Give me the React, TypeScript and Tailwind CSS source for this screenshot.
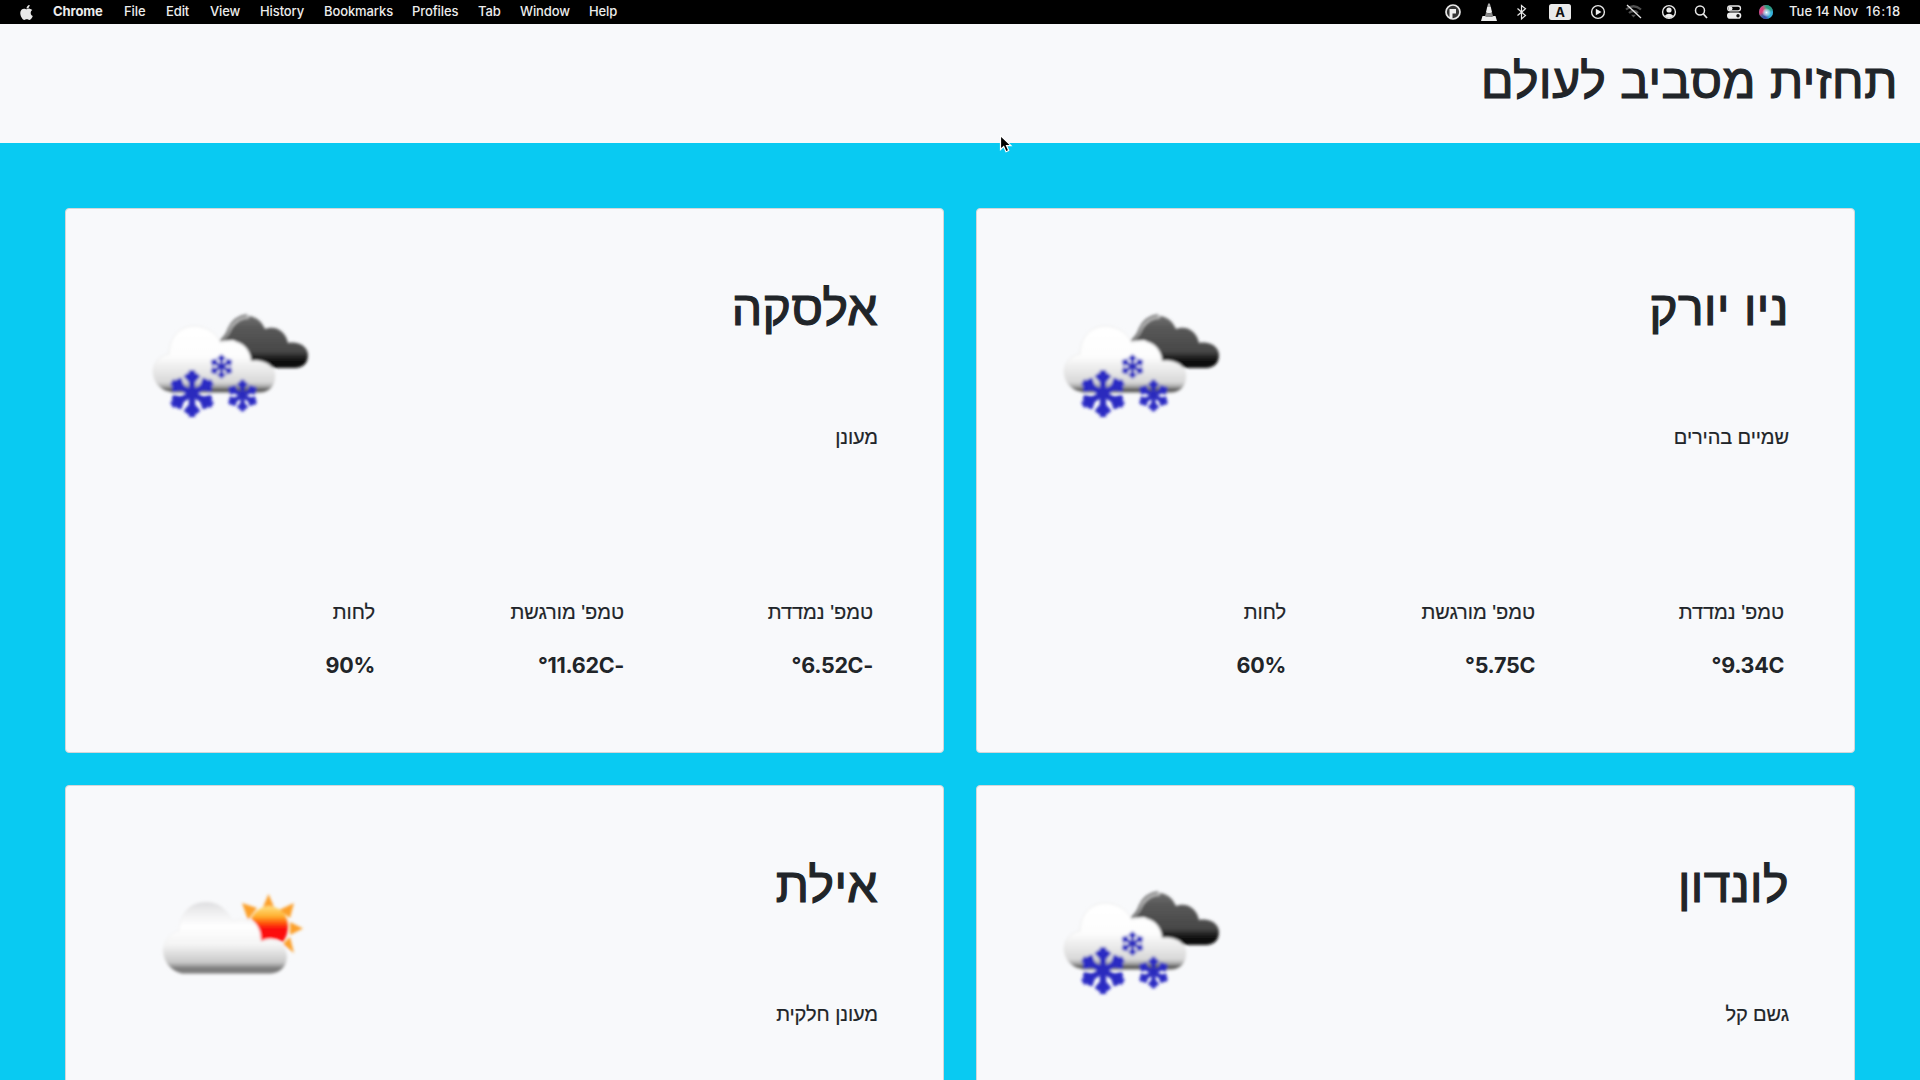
import React from "react";

const menu = [
  ["Chrome", "w-[71px] font-bold"],
  ["File", "w-[42px]"],
  ["Edit", "w-[44px]"],
  ["View", "w-[50px]"],
  ["History", "w-[64px]"],
  ["Bookmarks", "w-[88px]"],
  ["Profiles", "w-[66px]"],
  ["Tab", "w-[42px]"],
  ["Window", "w-[69px]"],
  ["Help", "w-[40px]"],
];

function Flake({ x, y, r, id }: { x: number; y: number; r: number; id: string }) {
  return (
    <g transform={`translate(${x} ${y}) scale(${r / 10})`} stroke={`url(#${id}f)`} fill="none">
      {[0, 60, 120, 180, 240, 300].map((a) => (
        <g key={a} transform={`rotate(${a})`}>
          <path d="M0.010 0.5L0 -9.8" strokeWidth="2.6" />
          <path d="M-2.6 -8L0 -5L2.6 -8" strokeWidth="2.4" />
        </g>
      ))}
    </g>
  );
}

function SnowIcon({ id }: { id: string }) {
  return (
    <svg viewBox="0 0 200 150" className="ml-[-1px] h-[150px] w-[200px]">
      <defs>
        <linearGradient id={id + "d"} x1="0" y1="25" x2="0" y2="78" gradientUnits="userSpaceOnUse">
          <stop offset="0" stopColor="#707070" />
          <stop offset=".25" stopColor="#575757" />
          <stop offset=".68" stopColor="#484848" />
          <stop offset=".88" stopColor="#080808" />
          <stop offset="1" stopColor="#111" />
        </linearGradient>
        <linearGradient id={id + "w"} x1="0" y1="35" x2="0" y2="104" gradientUnits="userSpaceOnUse">
          <stop offset="0" stopColor="#fff" />
          <stop offset=".45" stopColor="#fdfdfd" />
          <stop offset=".83" stopColor="#d8d8d8" />
          <stop offset=".89" stopColor="#aaa" />
          <stop offset=".94" stopColor="#555" />
          <stop offset="1" stopColor="#777" />
        </linearGradient>
        <linearGradient id={id + "f"} x1="-10" y1="-10" x2="10" y2="10" gradientUnits="userSpaceOnUse">
          <stop offset="0" stopColor="#2c2cd0" />
          <stop offset="1" stopColor="#2a2aa8" />
        </linearGradient>
        <filter id={id + "b"}><feGaussianBlur stdDeviation="1.4" /></filter>
      </defs>
      <g filter={`url(#${id}b)`}>
        <path d="M90 51C97 49 97 43 99 38C103 28 112 25 119 26C127 27 132 32 135 39C146 35 156 42 158 53C169 51 178 57 178 65C178 73 173 78 165 78H145L121 71L104 50Z" fill={`url(#${id}d)`} />
        <path d="M92 50Q98 44 101 37Q108 27 119 27" fill="none" stroke="#c0c0c0" strokeWidth="3" />
        <path d="M90 51Q96 47 99 38Q104 27 117 25" fill="none" stroke="#555" strokeWidth="1.6" />
        <path d="M39 102C29 100 23 91 23 81C24 71 31 65 39 64C39 48 49 36 64 36C77 36 86 43 91 53C105 47 120 55 121 71C134 69 145 76 145 86C145 96 140 102 131 103H42Z" fill={`url(#${id}w)`} stroke="#e6e6e6" strokeWidth=".8" />
        <Flake x={62} y={103.5} r={24} id={id} />
        <Flake x={91.5} y={76.5} r={12} id={id} />
        <Flake x={112.5} y={105.5} r={16} id={id} />
      </g>
    </svg>
  );
}

function SunIcon() {
  return (
    <svg viewBox="0 0 200 130" className="mt-[3px] ml-[9px] h-[130px] w-[200px]">
      <defs>
        <linearGradient id="sun" x1="0" y1="36" x2="0" y2="73" gradientUnits="userSpaceOnUse">
          <stop offset="0" stopColor="#ffe080" />
          <stop offset=".28" stopColor="#ffb02e" />
          <stop offset=".45" stopColor="#ff5a08" />
          <stop offset=".62" stopColor="#fb0808" />
          <stop offset="1" stopColor="#ff1010" />
        </linearGradient>
        <linearGradient id="cl" x1="0" y1="31" x2="0" y2="104" gradientUnits="userSpaceOnUse">
          <stop offset="0" stopColor="#dcdcde" />
          <stop offset=".18" stopColor="#f1f1f2" />
          <stop offset=".35" stopColor="#fff" />
          <stop offset=".6" stopColor="#f4f4f4" />
          <stop offset=".84" stopColor="#c8c8c8" />
          <stop offset=".93" stopColor="#777" />
          <stop offset="1" stopColor="#888" />
        </linearGradient>
        <filter id="sb"><feGaussianBlur stdDeviation="1.4" /></filter>
      </defs>
      <g filter="url(#sb)">
        <g fill="#fca02c">
          <path d="M128.500 24L134 37H123Z" />
          <path d="M102 33L117 38L108 50Z" />
          <path d="M154 33L150 48L139 40Z" />
          <path d="M163 58.500L150 52V65Z" />
          <path d="M154 83L143 74L150 67Z" />
        </g>
        <path d="M42 104C30 101 23 91 23 80C24 70 31 62 39 61C40 43 50 32 66 32C79 32 88 40 92 51C107 45 121 54 122 70C136 67 147 76 147 87C147 96 141 103 131 104Z" fill="url(#cl)" stroke="#ececec" strokeWidth=".6" />
        <path d="M111 49C115 40 122 36 130 36C140 37 148 45 148 56C148 63 146 68 143 72Q132 66 121 71C121 61 118 54 111 49Z" fill="url(#sun)" />
      </g>
    </svg>
  );
}

type City = { name: string; desc: string; icon: React.ReactNode; temps?: [string, string, string] };

const cities: City[] = [
  { name: "ניו יורק", desc: "שמיים בהירים", icon: <SnowIcon id="a" />, temps: ["9.34C°", "5.75C°", "60%"] },
  { name: "אלסקה", desc: "מעונן", icon: <SnowIcon id="b" />, temps: ["-6.52C°", "-11.62C°", "90%"] },
  { name: "לונדון", desc: "גשם קל", icon: <SnowIcon id="c" /> },
  { name: "אילת", desc: "מעונן חלקית", icon: <SunIcon /> },
];

function Card({ city }: { city: City }) {
  return (
    <article className="h-[545px] w-[879px] rounded-[4px] border border-[#d3d6d9] bg-[#f8f9fb] px-[65px] pt-[67px]">
      <div className="flex h-[300px] justify-between">
        <div className="font-['Liberation_Sans',sans-serif]">
          <h2 className="h-[66px] text-[48px] leading-[66px] tracking-[0.5px] whitespace-nowrap [-webkit-text-stroke:1.2px_#212529]">{city.name}</h2>
          <p className="mt-[80px] text-[20px] leading-[30px] tracking-[-0.1px] whitespace-nowrap [-webkit-text-stroke:0.2px_#212529]">{city.desc}</p>
        </div>
        <div className="mt-[14px]">{city.icon}</div>
      </div>
      {city.temps && (
        <div className="mt-[21px] flex pr-[5px]">
          {["טמפ' נמדדת", "טמפ' מורגשת", "לחות"].map((l, i) => (
            <div key={l} className="w-[249px] shrink-0">
              <div className="font-['Liberation_Sans',sans-serif] text-[20px] leading-[30px] whitespace-nowrap [-webkit-text-stroke:0.2px_#212529]">{l}</div>
              <div className="mt-[23px] text-[21.5px] font-bold leading-[30px] tracking-[-0.3px] whitespace-nowrap">{city.temps?.[i]}</div>
            </div>
          ))}
        </div>
      )}
    </article>
  );
}

function StatusIcons() {
  return (
    <svg viewBox="1440 0 340 24" className="h-[24px] w-[340px]" fill="none" stroke="#e8e8e8">
      <circle cx="1453" cy="12" r="7" fill="#333" strokeWidth="1.7" />
      <path d="M1449.500 18V9h6.500v4.500h-3.500V18Z" fill="#eee" stroke="none" />
      <path d="M1487.200 7L1488.200 3.500h1.600L1490.800 7Z" fill="#aaa" stroke="none" />
      <path d="M1487.200 7h3.600l1.300 5.500q-3 1.500-6.200 0Z" fill="#eee" stroke="none" />
      <path d="M1486 12.500q3 1.500 6 0l1 3.500q-4 2-8 0Z" fill="#888" stroke="none" />
      <path d="M1482.500 16h2.200q4.500 2 9 0h1.800l1.500 5h-16Z" fill="#eee" stroke="none" />
      <path d="M1517.500 8.500L1525.500 15.500L1521.500 19V5.500L1525.500 8.800L1517.500 15.500" strokeWidth="1.200" />
      <rect x="1549" y="4" width="22" height="16" rx="2.500" fill="#eaeaea" stroke="none" />
      <text x="1560" y="17" textAnchor="middle" fontSize="13" fontWeight="700" fill="#111" stroke="none" fontFamily="Inter">A</text>
      <circle cx="1598" cy="12" r="6.400" strokeWidth="1.400" />
      <path d="M1595.800 8.800L1601.500 12L1595.800 15.200Z" fill="#eee" stroke="none" />
      <g stroke="#505050" strokeWidth="2.200"><path d="M1626 9.500q7.500-6.500 15 0M1629 13q4.500-4 9 0" /><path d="M1631 14.800L1633.500 17.500L1636 14.800Z" fill="#505050" stroke="none" /></g>
      <path d="M1627 5L1641 18" strokeWidth="1.300" />
      <circle cx="1669" cy="12" r="6.400" strokeWidth="1.400" />
      <g fill="#eee" stroke="none"><circle cx="1669" cy="10" r="2.600" /><path d="M1664.500 16q4.500-4.500 9 0q-4.500 4-9 0Z" /></g>
      <circle cx="1700" cy="10.500" r="4.500" strokeWidth="1.500" /><path d="M1703.400 14L1707 18" strokeWidth="1.800" />
      <rect x="1727.700" y="6" width="12.800" height="4.800" rx="2.400" strokeWidth="1.300" /><circle cx="1730.500" cy="8.400" r="2" fill="#eee" stroke="none" />
      <rect x="1727" y="12.600" width="14.300" height="6.200" rx="3.100" fill="#eee" stroke="none" /><circle cx="1738" cy="15.700" r="1.700" fill="#111" stroke="none" />
      <defs>
        <radialGradient id="siri"><stop stopColor="#fff" /><stop offset=".35" stopColor="#b5dcf5" stopOpacity=".9" /><stop offset="1" stopColor="#fff" stopOpacity="0" /></radialGradient>
        <clipPath id="sc"><circle cx="1766" cy="12" r="7" /></clipPath>
        <filter id="sf"><feGaussianBlur stdDeviation="1.3" /></filter>
      </defs>
      <g clipPath="url(#sc)" stroke="none">
        <rect x="1759" y="5" width="14" height="14" fill="#3f6a9c" />
        <g filter="url(#sf)">
          <path d="M1766 12L1757 17V5L1763 4Z" fill="#d8407c" />
          <path d="M1766 12L1763 3H1775V10Z" fill="#2c9c80" />
          <path d="M1766 12L1776 10V18L1769 20Z" fill="#35b4dc" />
          <path d="M1766 12L1768 21H1760Z" fill="#3a50b0" />
        </g>
      </g>
      <circle cx="1766.500" cy="12.500" r="4.500" fill="url(#siri)" stroke="none" />
    </svg>
  );
}

export default function App() {
  return (
    <div className="relative h-[1080px] w-[1920px] overflow-hidden bg-[#09caf2] font-[Inter,'Open_Sans',sans-serif] text-[#212529]">
      <nav className="flex h-[24px] items-center bg-black text-[13px] font-medium tracking-[-0.1px] text-[#ececec]">
        <svg viewBox="0 0 384 512" className="ml-[20px] mr-[20px] h-[17px] w-[13px]" fill="#e8e8e8">
          <path d="M318.700 268.700c-.2-36.700 16.400-64.400 50-84.800-18.800-26.900-47.200-41.700-84.700-44.600-35.500-2.800-74.300 20.700-88.500 20.700-15 0-49.400-19.700-76.400-19.700C63.300 141.200 4 184.800 4 273.500q0 39.300 14.400 81.200c12.800 36.700 59 126.700 107.200 125.200 25.200-.6 43-17.900 75.800-17.900 31.800 0 48.300 17.900 76.400 17.900 48.600-.7 90.400-82.500 102.600-119.300-65.200-30.700-61.700-90-61.700-91.900zm-56.600-164.200c27.300-32.400 24.800-61.900 24-72.500-24.100 1.400-52 16.400-67.900 34.900-17.500 19.800-27.800 44.300-25.600 71.900 26.100 2 49.900-11.400 69.500-34.300z" />
        </svg>
        {menu.map(([t, c]) => (
          <span key={t} className={c}>{t}</span>
        ))}
        <div className="ml-auto flex items-center">
          <StatusIcons />
          <span className="ml-[9px] w-[77px] tracking-[0.05px] whitespace-nowrap">Tue 14 Nov</span>
          <span className="w-[54px] tracking-[0.8px]">16:18</span>
        </div>
      </nav>
      <header dir="rtl" className="flex h-[119px] items-center bg-[#f8f9fb] px-[22px]">
        <h1 className="mt-[-4px] text-[48px] leading-[66px] tracking-[0.6px] whitespace-nowrap [-webkit-text-stroke:1.2px_#212529]"><span className="font-['Liberation_Sans',sans-serif]">תחזית מסביב לעולם</span></h1>
      </header>
      <main dir="rtl" className="grid grid-cols-[879px_879px] gap-x-[32px] gap-y-[32px] px-[65px] pt-[65px]">
        {cities.map((c) => (
          <Card key={c.name} city={c} />
        ))}
      </main>
      <svg viewBox="0 0 14 20" className="absolute left-[999px] top-[134px] h-[20px] w-[14px]">
        <path d="M1.500 1.500V15.500L4.700 12.500L7 17.800L9.700 16.500L7.500 11.600H12Z" fill="#000" stroke="#fff" strokeWidth="1.200" />
      </svg>
    </div>
  );
}
